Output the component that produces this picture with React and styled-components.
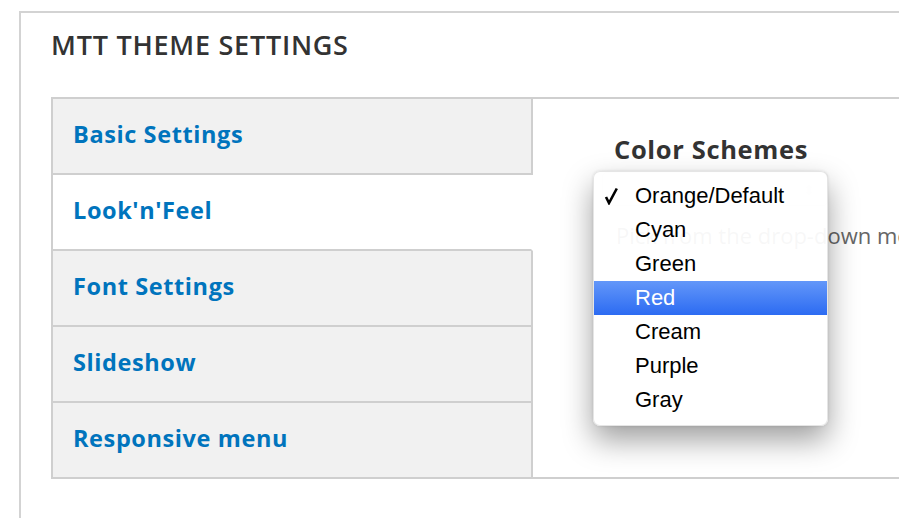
import React from "react";
import styled, { createGlobalStyle } from "styled-components";

const GlobalStyle = createGlobalStyle`
  html, body { margin: 0; padding: 0; background: #fff; overflow: hidden; }
  body { font-family: "Open Sans", "DejaVu Sans", sans-serif; }
`;

const Page = styled.div`
  padding: 11px 0 0 19px;
  width: 899px;
  height: 518px;
  box-sizing: border-box;
  overflow: hidden;
`;

const Panel = styled.section`
  border-top: 2px solid #d3d3d3;
  border-left: 2px solid #d3d3d3;
  padding: 0 0 60px 30px;
  width: 1060px;
  box-sizing: border-box;
`;

const Title = styled.h2`
  margin: 0;
  padding: 16px 0 0 0;
  height: 84px;
  box-sizing: border-box;
  font-size: 27px;
  line-height: 32px;
  letter-spacing: 0.75px;
  font-weight: 600;
  color: #333;
`;

const Tabs = styled.div`
  display: flex;
  border-top: 2px solid #cfcfcf;
  border-left: 2px solid #cfcfcf;
  border-bottom: 2px solid #cfcfcf;
`;

const TabList = styled.nav`
  display: flex;
  flex-direction: column;
  width: 480px;
  flex: none;
`;

const Tab = styled.a`
  display: flex;
  align-items: center;
  height: ${p => (p.$last ? 74 : 76)}px;
  box-sizing: border-box;
  padding: 0 0 5px 20px;
  background: ${p => (p.$active ? "#fff" : "#f1f1f1")};
  border-bottom: ${p => (p.$last ? "none" : "2px solid #cfcfcf")};
  border-right: 2px solid ${p => (p.$active ? "transparent" : "#cfcfcf")};
  color: #0074bd;
  font-size: 23.5px;
  letter-spacing: 0.6px;
  font-weight: 700;
  text-decoration: none;
  cursor: pointer;
`;

const Content = styled.div`
  position: relative;
  flex: 1;
  padding: 35px 0 0 81px;
  background: #fff;
`;

const Heading = styled.h3`
  margin: 0;
  font-size: 25.5px;
  line-height: 30px;
  letter-spacing: 0.65px;
  font-weight: 700;
  color: #333;
`;

const SelectBox = styled.div`
  margin: 8px 0 0 -12px;
  width: 226px;
  height: 34px;
  box-sizing: border-box;
  border: 1px solid #e2e2e2;
  border-radius: 5px;
  display: flex;
  justify-content: flex-end;
  align-items: center;
  padding-right: 12px;
  color: #ddd;
  font-size: 14px;
`;

const Description = styled.p`
  margin: 14px 0 0 2px;
  white-space: nowrap;
  font-size: 22px;
  line-height: 30px;
  color: #666;
`;

const Menu = styled.ul`
  position: absolute;
  left: 60px;
  top: 72px;
  width: 235px;
  margin: 0;
  padding: 7px 0 8px;
  box-sizing: border-box;
  list-style: none;
  background: rgba(255, 255, 255, 0.95);
  border: 1px solid rgba(0, 0, 0, 0.1);
  border-radius: 7px;
  box-shadow: 0 14px 30px rgba(0, 0, 0, 0.38), 0 0 3px rgba(0, 0, 0, 0.12);
  font-family: "Liberation Sans", Arial, sans-serif;
  font-size: 22px;
  color: #000;
`;

const Item = styled.li`
  position: relative;
  height: 34px;
  display: flex;
  align-items: center;
  padding-left: 41px;
  background: ${p =>
    p.$highlighted ? "linear-gradient(#6397f9, #2c6bf2)" : "transparent"};
  color: ${p => (p.$highlighted ? "#fff" : "#000")};
`;

const Check = styled.span`
  position: absolute;
  left: 10px;
  top: 8px;
  width: 14px;
  height: 18px;
  display: flex;
`;

const tabs = [
  "Basic Settings",
  "Look'n'Feel",
  "Font Settings",
  "Slideshow",
  "Responsive menu",
];

const options = ["Orange/Default", "Cyan", "Green", "Red", "Cream", "Purple", "Gray"];

export default function App() {
  return (
    <>
      <GlobalStyle />
      <Page>
        <Panel>
          <Title>MTT THEME SETTINGS</Title>
          <Tabs>
            <TabList>
              {tabs.map((t, i) => (
                <Tab key={t} $active={i === 1} $last={i === tabs.length - 1}>
                  {t}
                </Tab>
              ))}
            </TabList>
            <Content>
              <Heading>Color Schemes</Heading>
              <SelectBox>⬍</SelectBox>
              <Description>Pick from the drop-down menu the color scheme.</Description>
              <Menu>
                {options.map((o, i) => (
                  <Item key={o} $highlighted={o === "Red"}>
                    {i === 0 && (
                      <Check>
                        <svg width="14" height="18" viewBox="0 0 14 18">
                          <path
                            d="M2 10 L5 16 L12.8 1.5"
                            fill="none"
                            stroke="#000"
                            strokeWidth="2.6"
                            strokeLinejoin="miter"
                          />
                        </svg>
                      </Check>
                    )}
                    {o}
                  </Item>
                ))}
              </Menu>
            </Content>
          </Tabs>
        </Panel>
      </Page>
    </>
  );
}
